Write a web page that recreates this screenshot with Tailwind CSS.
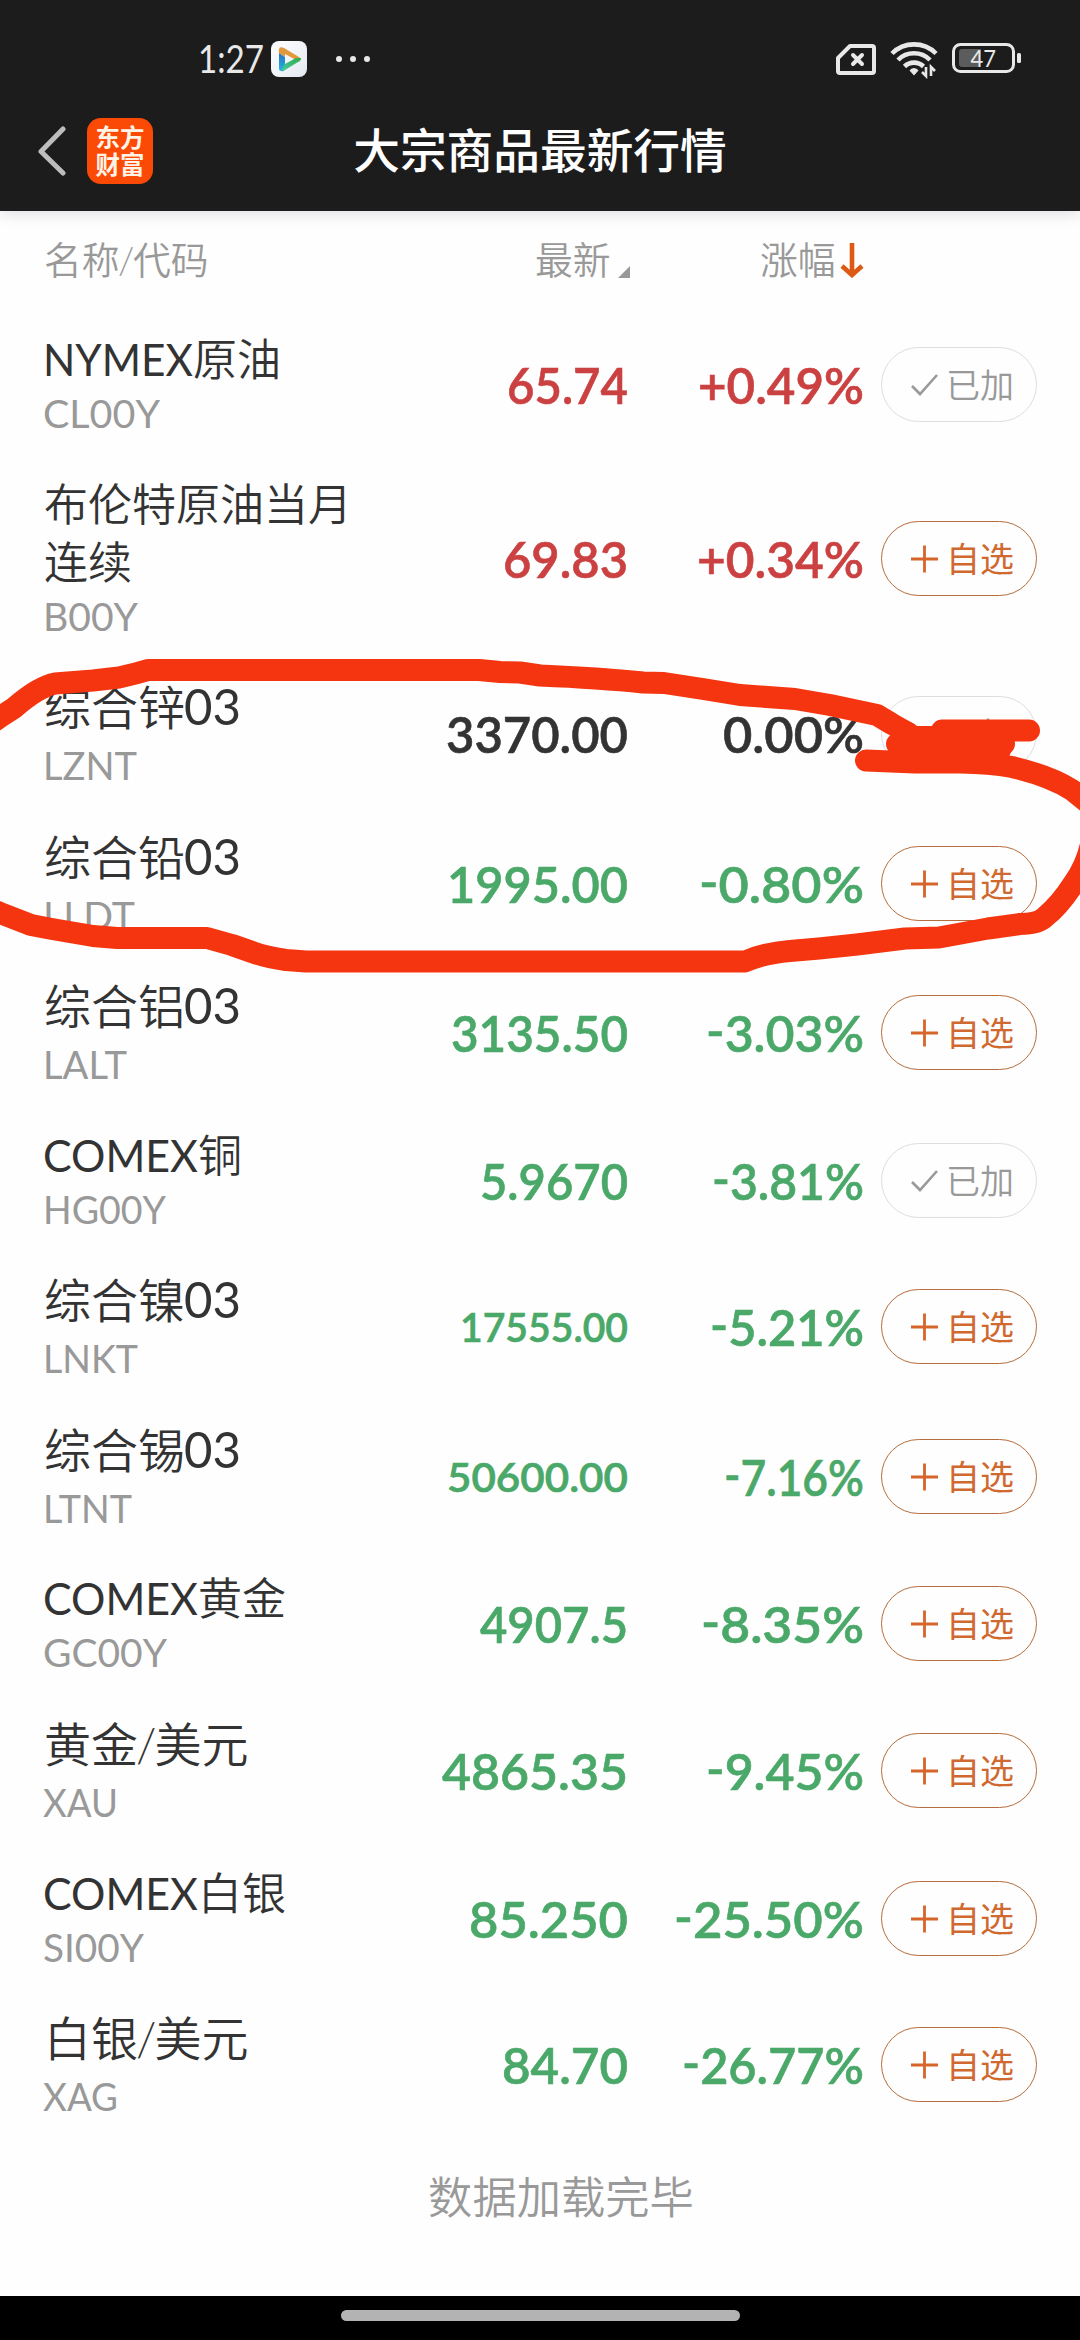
<!DOCTYPE html>
<html lang="zh-CN">
<head>
<meta charset="utf-8">
<title>大宗商品最新行情</title>
<script src="https://cdn.jsdelivr.net/npm/@tailwindcss/browser@4"></script>
</head>
<body class="w-[1080px] h-[2340px] overflow-hidden bg-[#fefefe] font-[Lato,'Noto_Sans_CJK_SC',sans-serif]">
<div class="relative flex flex-col w-[1080px] h-[2340px] overflow-hidden">

  <header class="flex flex-col h-[211px] shrink-0 bg-[#1c1c1c] shadow-[0_2px_14px_rgba(40,20,50,0.16)]">
    <div class="flex items-center h-[118px] pl-[198px] pr-[59px]">
      <svg class="shrink-0 overflow-visible" width="66" height="28"><text x="0" y="28" font-size="39" fill="#e8e8e8" textLength="66" lengthAdjust="spacingAndGlyphs">1:27</text></svg>
      <svg class="ml-[7px] shrink-0" width="36" height="36" viewBox="0 0 36 36">
        <defs>
          <linearGradient id="tile" x1="0" y1="0" x2="1" y2="1"><stop offset="0" stop-color="#fff"/><stop offset="1" stop-color="#e3e9f2"/></linearGradient>
          <linearGradient id="blue" x1="0" y1="0" x2="0" y2="1"><stop offset="0" stop-color="#2573c8"/><stop offset="1" stop-color="#27b3d8"/></linearGradient>
          <linearGradient id="green" x1="0" y1="1" x2="1" y2="0"><stop offset="0" stop-color="#45c9a0"/><stop offset="1" stop-color="#2fae4c"/></linearGradient>
        </defs>
        <rect width="36" height="36" rx="8" fill="url(#tile)"/>
        <path d="M8 12 L14 16 V24 L13 30 Q8 31 8 27Z" fill="url(#blue)"/>
        <path d="M8 12 Q7 4 13 7 L28 16 Q31 18 27 20 L14 13 V16Z" fill="#e0983c"/>
        <path d="M25 17 H30 Q30 20 27 21 L14 29 Q11 31 11 28 L14 23Z" fill="url(#green)"/>
      </svg>
      <div class="flex gap-2 ml-[29px]">
        <i class="size-1.5 rounded-full bg-[#e8e8e8]"></i><i class="size-1.5 rounded-full bg-[#e8e8e8]"></i><i class="size-1.5 rounded-full bg-[#e8e8e8]"></i>
      </div>
      <svg class="ml-auto shrink-0" width="185" height="40" viewBox="836 40 185 40">
        <g fill="none" stroke="#e8e8e8">
          <path d="M850 47 H872 Q874 47 874 49 V72 Q874 74 872 74 H840 Q838 74 838 72 V59Z" stroke-width="4" stroke-linejoin="round"/>
          <path d="M853 56 L862 65 M862 56 L853 65" stroke-width="4" stroke-linecap="round"/>
          <path d="M892 54.500 A31 31 0 0 1 936 54.500" stroke-width="4.600"/>
          <path d="M898 61 A22.500 22.500 0 0 1 930 61" stroke-width="4.600"/>
          <path d="M904.500 67.500 A13.500 13.500 0 0 1 923.500 67.500" stroke-width="4.600"/>
          <rect x="953.500" y="45.500" width="60" height="27" rx="7" stroke-width="3"/>
        </g>
        <path d="M914 69 Q917 69 918.500 71.500 L914 76.500 L909.500 71.500 Q911 69 914 69Z" fill="#e8e8e8"/>
        <path d="M926 68 V77 L922 73 M931 77 V68 L935 72" fill="none" stroke="#e8e8e8" stroke-width="2.600"/>
        <path d="M962 50 H981 V68 H962 Q959 68 959 65 V53 Q959 50 962 50Z" fill="#5c5c5c"/>
        <rect x="1017" y="54" width="4" height="10" rx="1.500" fill="#e8e8e8"/>
        <text x="970.500" y="68" font-size="24" fill="#e8e8e8" textLength="25.500" lengthAdjust="spacingAndGlyphs">47</text>
      </svg>
    </div>
    <div class="grid grid-cols-[1fr_auto_1fr] items-center h-[66px] px-[38px]">
      <div class="flex items-center">
        <svg class="shrink-0" width="29" height="50" viewBox="0 0 29 50"><path d="M25 3 L3 25.500 L25 47" fill="none" stroke="#bdbdbd" stroke-width="5" stroke-linecap="round" stroke-linejoin="round"/></svg>
        <div class="flex flex-col items-center justify-center gap-px ml-5 w-[66px] h-[66px] rounded-[14px] bg-[#fb4a05] text-[#fff3e6] text-[24.500px] leading-[26px] font-bold">
          <span>东方</span><span>财富</span>
        </div>
      </div>
      <h1 class="text-[46.700px] leading-[64px] pb-[2px] font-medium text-white whitespace-nowrap">大宗商品最新行情</h1>
    </div>
  </header>

  <div class="flex items-center h-[100px] px-[44px] text-[37.800px] leading-[98px] pb-[2px] text-[#999] font-[350]">
    <span class="w-[491px]">名称<span class="-mx-[1.500px]">/</span>代码</span>
    <span class="flex items-center w-[225px]">最新<svg class="ml-[7px] mt-[24px]" width="12" height="12"><path d="M12 0V12H0Z" fill="#999"/></svg></span>
    <span class="flex items-center">涨幅<svg class="ml-[4px]" width="24" height="36" viewBox="0 0 24 36"><path d="M12 1V32M2 24L12 33L22 24" fill="none" stroke="#dd5a14" stroke-width="4.600"/></svg></span>
  </div>

  <main id="list" class="flex flex-col px-[44px]"></main>

  <p class="mt-[65px] text-center text-[44.300px] leading-[60px] font-[350] text-[#999] pl-[42px]">数据加载完毕</p>

  <div class="flex justify-center mt-auto h-[44px] bg-black shrink-0"><i class="mt-[14px] w-[399px] h-[11px] rounded-full bg-[#b3b3b3]"></i></div>

  <!-- hand-drawn marker stroke -->
  <svg class="absolute left-0 top-0" width="1080" height="2340" viewBox="0 0 1080 2340" fill="none" stroke="#f5350f" stroke-width="22" stroke-linecap="round" stroke-linejoin="round">
    <path d="M-14 727 L0 717 L14 708 Q38 687 55 683.500 L93 680.500 L119 677.500 Q135 674 148 670 H479 L500 672 L520 672.500 L540 675.500 Q600 678 643 682.500 L664 683 L703 689 L740 695 L795 699 L830 705 L877 715 L892 724 L908 733"/>
    <path d="M908 733 L912 736 M942 730.500 H1029 M897 744 H1004 M866 760.500 L915 762.500 H960 Q990 763 1012 767 Q1050 776 1072 790 L1092 806"/>
    <path d="M908 737 H1000 V750 H915Z"/>
    <path d="M1092 840 Q1087 865 1074 883 Q1060 905 1045 917 Q1038 924 1020 924 L988 928.500 L939 937.500 L905 938.500 L857 944.500 L819 948.500 L790 951 Q765 953 745 961.500 H306 L286 960 Q265 957 252 952 L232 945 L207 938 H117 L93 936 L52 929 L31 925 L0 913 L-12 908"/>
  </svg>
</div>

<script>
// name parts, code, price, change, watched; lw/cw/pw/gw are the text widths, top is the distance to the row above
const rows = [
  {top:36, latin:'NYMEX', lw:150, cjk:'原油', code:'CL00Y', cw:117, price:'65.74', pw:121, chg:'+0.49%', gw:166, tone:'up', added:true},
  {top:99, cjk:'布伦特原油当月<br>连续', small:true, code:'B00Y', cw:95, price:'69.83', pw:125, chg:'+0.34%', gw:167, tone:'up'},
  {top:100, cjk:'综合锌', tail:'03', code:'LZNT', cw:94, price:'3370.00', pw:182, chg:'0.00%', gw:141, tone:'flat', added:true},
  {top:75, cjk:'综合铅', tail:'03', code:'LLDT', cw:92, price:'1995.00', pw:181, chg:'-0.80%', gw:165, tone:'down'},
  {top:74, cjk:'综合铝', tail:'03', code:'LALT', cw:84, price:'3135.50', pw:177, chg:'-3.03%', gw:158, tone:'down'},
  {top:73, latin:'COMEX', lw:155, cjk:'铜', code:'HG00Y', cw:123, price:'5.9670', pw:148, chg:'-3.81%', gw:152, tone:'down', added:true},
  {top:71, cjk:'综合镍', tail:'03', code:'LNKT', cw:95, price:'17555.00', pw:168, chg:'-5.21%', gw:154, tone:'down', compact:true},
  {top:75, cjk:'综合锡', tail:'03', code:'LTNT', cw:89, price:'50600.00', pw:181, chg:'-7.16%', gw:140, tone:'down', compact:true},
  {top:72, latin:'COMEX', lw:155, cjk:'黄金', code:'GC00Y', cw:124, price:'4907.5', pw:148, chg:'-8.35%', gw:163, tone:'down'},
  {top:72, cjk:'黄金<span class="-mx-0.5">/</span>美元', code:'XAU', cw:75, price:'4865.35', pw:186, chg:'-9.45%', gw:158, tone:'down'},
  {top:73, latin:'COMEX', lw:155, cjk:'白银', code:'SI00Y', cw:101, price:'85.250', pw:159, chg:'-25.50%', gw:190, tone:'down'},
  {top:71, cjk:'白银<span class="-mx-0.5">/</span>美元', code:'XAG', cw:75, price:'84.70', pw:126, chg:'-26.77%', gw:182, tone:'down'},
];
const tones = {up:'text-[#cb4141]', flat:'text-[#333]', down:'text-[#4aa869]'};
// one run of Latin text set to a given width; the box is as tall as the capitals
const fit = (text, width, size, cls = '') => {
  const h = Math.round(size * 0.72);
  const body = text[0] === '-' ? `<tspan dy="-3">-</tspan><tspan dy="3">${text.slice(1)}</tspan>` : text;
  return `<svg class="inline-block align-baseline overflow-visible shrink-0 ${cls}" width="${width}" height="${h}"><text x="0" y="${h}" font-size="${size}" fill="currentColor" textLength="${width}" lengthAdjust="spacingAndGlyphs">${body}</text></svg>`;
};
const added = `<div class="flex items-center w-[156px] h-[75px] pl-[28px] rounded-full border border-[#dedede] text-[#999] text-[34px] font-[350] shrink-0">
  <svg width="30" height="26" viewBox="0 0 30 26"><path d="M2 14L10 22L27 3" fill="none" stroke="#999" stroke-width="2.600"/></svg><span class="ml-[6px]">已加</span></div>`;
const add = `<div class="flex items-center w-[156px] h-[75px] pl-[28px] rounded-full border border-[#b56d3d] text-[#cf6930] text-[34px] font-normal shrink-0">
  <svg width="30" height="28" viewBox="0 0 30 28"><path d="M1 14H28M14.500 .5V27.500" fill="none" stroke="#d6652b" stroke-width="2.800"/></svg><span class="ml-[6px]">自选</span></div>`;
document.getElementById('list').innerHTML = rows.map(r => {
  const small = r.latin || r.small;
  return `<div class="flex items-center h-[75px] w-[993px]" style="margin-top:${r.top}px">
    <div class="flex flex-col shrink-0 w-[330px] whitespace-nowrap">
      <div class="${small ? 'text-[44px] leading-[58px]' : 'text-[47px] leading-[58px] pt-[3px]'} text-[#333] font-[350]">${r.latin ? fit(r.latin, r.lw, 45, 'font-normal -ml-px') : ''}${r.cjk}${r.tail ? fit(r.tail, 57, 50, 'font-normal -ml-px') : ''}</div>
      <div class="flex items-center ${small ? 'h-[52px]' : 'h-[56px] pt-[3px]'} text-[#999]">${fit(r.code, r.cw, 39, 'font-normal -ml-px')}</div>
    </div>
    <div class="flex justify-end items-center shrink-0 w-[254px] h-[60px] pt-[2px] font-semibold stroke-current stroke-[0.6px] ${tones[r.tone]}">${fit(r.price, r.pw, r.compact ? 40 : 50)}</div>
    <div class="flex justify-end items-center shrink-0 w-[236px] mr-[17px] h-[60px] pt-[2px] font-semibold stroke-current stroke-[0.6px] ${tones[r.tone]}">${fit(r.chg, r.gw, 50)}</div>
    ${r.added ? added : add}
  </div>`;
}).join('');
</script>
</body>
</html>
